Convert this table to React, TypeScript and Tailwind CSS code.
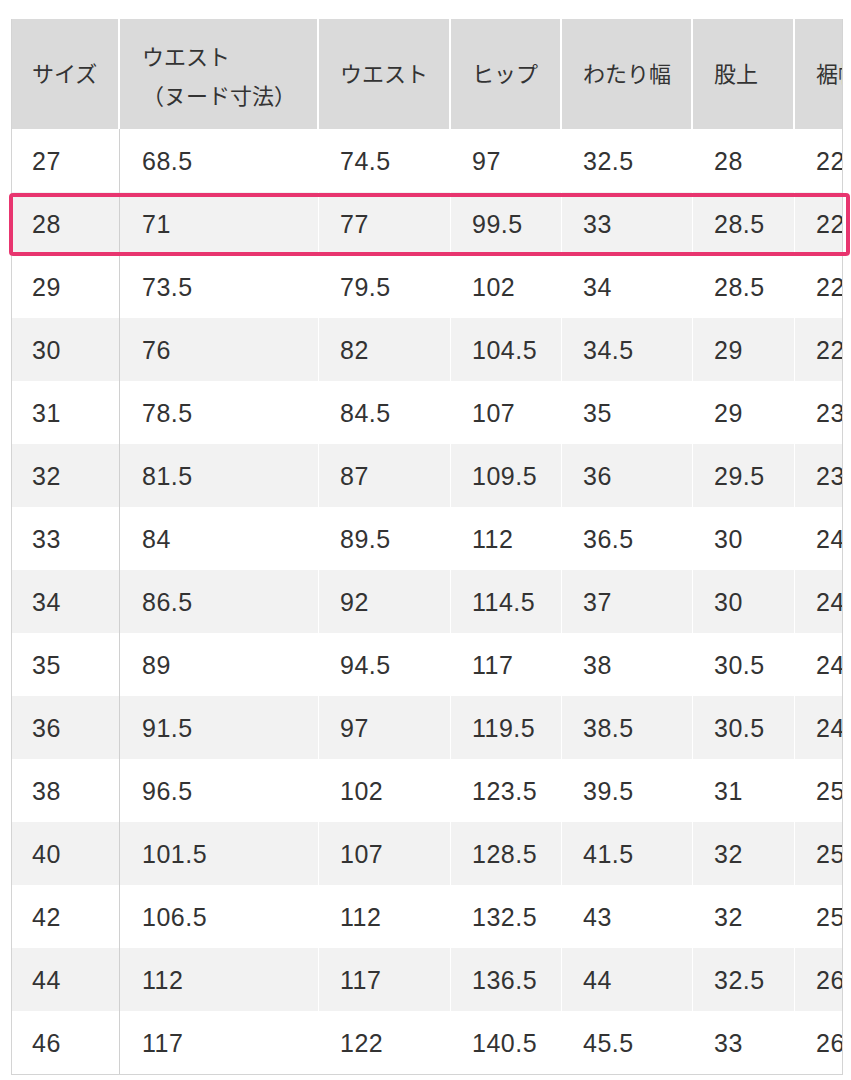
const columns = [
  { label: ['サイズ'], width: 'w-[108px]', pad: 'pl-[20px]' },
  { label: ['ウエスト', '（ヌード寸法）'], width: 'w-[199px]', pad: 'pl-[22px]' },
  { label: ['ウエスト'], width: 'w-[132px]', pad: 'pl-[21px]' },
  { label: ['ヒップ'], width: 'w-[111px]', pad: 'pl-[21px]' },
  { label: ['わたり幅'], width: 'w-[131px]', pad: 'pl-[21px]' },
  { label: ['股上'], width: 'w-[102px]', pad: 'pl-[21px]' },
  { label: ['裾幅'], width: 'w-[140px]', pad: 'pl-[21px]' },
]

const rows = [
  ['27', '68.5', '74.5', '97', '32.5', '28', '22'],
  ['28', '71', '77', '99.5', '33', '28.5', '22'],
  ['29', '73.5', '79.5', '102', '34', '28.5', '22'],
  ['30', '76', '82', '104.5', '34.5', '29', '22'],
  ['31', '78.5', '84.5', '107', '35', '29', '23'],
  ['32', '81.5', '87', '109.5', '36', '29.5', '23'],
  ['33', '84', '89.5', '112', '36.5', '30', '24'],
  ['34', '86.5', '92', '114.5', '37', '30', '24'],
  ['35', '89', '94.5', '117', '38', '30.5', '24'],
  ['36', '91.5', '97', '119.5', '38.5', '30.5', '24'],
  ['38', '96.5', '102', '123.5', '39.5', '31', '25'],
  ['40', '101.5', '107', '128.5', '41.5', '32', '25'],
  ['42', '106.5', '112', '132.5', '43', '32', '25'],
  ['44', '112', '117', '136.5', '44', '32.5', '26'],
  ['46', '117', '122', '140.5', '45.5', '33', '26'],
]

export default function App() {
  return (
    <div
      className="relative min-h-[1080px] w-[851px] bg-white pl-[11px] pt-[19px] text-[#333]"
      style={{ fontFamily: '"Liberation Sans", "Noto Sans CJK JP", sans-serif' }}
    >
      <div className="w-[832px] overflow-hidden border-x border-b border-[#d4d4d4]">
        <div className="flex h-[110px] w-max bg-[#dadada]">
          {columns.map((col, i) => (
            <div
              key={i}
              className={`flex shrink-0 flex-col justify-center border-r-2 border-white text-[22px] leading-[39px] ${col.width} ${col.pad} ${col.label.length > 1 ? 'pt-[6px]' : ''}`}
            >
              {col.label.map((line) => (
                <span key={line} className="whitespace-nowrap">
                  {line}
                </span>
              ))}
            </div>
          ))}
        </div>
        {rows.map((row, r) => (
          <div key={row[0]} className={`flex h-[63px] w-max ${r % 2 === 1 ? 'bg-[#f2f2f2]' : 'bg-white'}`}>
            {row.map((value, i) => (
              <div
                key={i}
                className={`flex shrink-0 items-center pt-[3px] text-[25px] tracking-[0.02em] ${columns[i].width} ${columns[i].pad} ${
                  i === 0 ? 'border-r border-[#d0d0d0]' : 'border-r border-white'
                }`}
              >
                {value}
              </div>
            ))}
          </div>
        ))}
      </div>
      <div className="pointer-events-none absolute left-[9px] top-[193px] h-[63px] w-[841px] rounded-[4px] border-4 border-[#e8356f]" />
    </div>
  )
}
